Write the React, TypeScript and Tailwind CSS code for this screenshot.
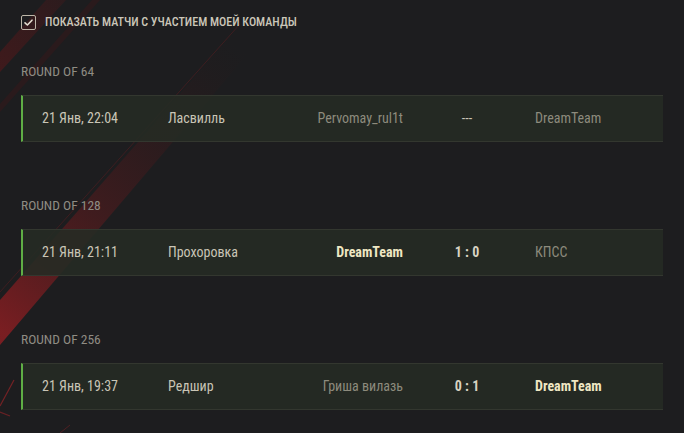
import React from "react";

type Match = {
  date: string;
  t1: string;
  t2: string;
  score: string;
  t3: string;
  win: 0 | 2 | 3;
};

const sections: { title: string; m: Match }[] = [
  { title: "ROUND OF 64", m: { date: "21 Янв, 22:04", t1: "Ласвилль", t2: "Pervomay_rul1t", score: "---", t3: "DreamTeam", win: 0 } },
  { title: "ROUND OF 128", m: { date: "21 Янв, 21:11", t1: "Прохоровка", t2: "DreamTeam", score: "1 : 0", t3: "КПСС", win: 2 } },
  { title: "ROUND OF 256", m: { date: "21 Янв, 19:37", t1: "Редшир", t2: "Гриша вилазь", score: "0 : 1", t3: "DreamTeam", win: 3 } },
];

function Row({ m }: { m: Match }) {
  return (
    <div className="flex items-center h-[47px] border-l-2 border-l-[#5fae45] border-y border-y-[#33372f] bg-[#262b23]/90 text-[14px] leading-[17px]">
      <div className="w-[145px] pl-[19px] text-[#c9c5b6]">{m.date}</div>
      <div className="w-[120px] text-[#c9c5b6]">{m.t1}</div>
      <div className={"w-[115px] text-right " + (m.win === 2 ? "text-[#efe7c3] font-bold" : "text-[#8d8b7d]")}>{m.t2}</div>
      <div className={"w-[132px] text-center pr-[4px] " + (m.score === "---" ? "text-[#c9c5b6]" : "text-[#d8d3c2] font-bold")}>{m.score}</div>
      <div className={m.win === 3 ? "text-[#efe7c3] font-bold" : "text-[#8d8b7d]"}>{m.t3}</div>
    </div>
  );
}

export default function App() {
  return (
    <div
      className="relative w-[684px] h-[433px] overflow-hidden bg-[#1d1d1f]"
      style={{ fontFamily: '"Roboto Condensed", "Liberation Sans Narrow", "DejaVu Sans Condensed", Roboto, sans-serif' }}
    >
      <svg className="absolute inset-0" width="684" height="433" viewBox="0 0 684 433">
        <defs>
          <linearGradient id="band" x1="0" y1="330" x2="230" y2="40" gradientUnits="userSpaceOnUse">
            <stop offset="0" stopColor="#8a1e22" stopOpacity="0.85" />
            <stop offset="0.4" stopColor="#6a1a1d" stopOpacity="0.45" />
            <stop offset="1" stopColor="#3a1416" stopOpacity="0" />
          </linearGradient>
          <linearGradient id="band2" x1="0" y1="90" x2="90" y2="0" gradientUnits="userSpaceOnUse">
            <stop offset="0" stopColor="#5a1719" stopOpacity="0.6" />
            <stop offset="1" stopColor="#5a1719" stopOpacity="0.2" />
          </linearGradient>
        </defs>
        <polygon points="0,345 0,300 250,14 280,16" fill="url(#band)" />
        <line x1="0" y1="292" x2="240" y2="24" stroke="#7a1e22" strokeWidth="1" opacity="0.35" />
        <polygon points="0,72 0,52 46,0 66,0" fill="url(#band2)" />
        <polygon points="0,112 0,104 92,0 100,0" fill="#4a1517" opacity="0.3" />
        <line x1="0" y1="406" x2="14" y2="380" stroke="#9a2428" strokeWidth="1.2" opacity="0.7" />
        <line x1="0" y1="412" x2="10" y2="416" stroke="#9a2428" strokeWidth="1.2" opacity="0.6" />
        <line x1="60" y1="433" x2="70" y2="425" stroke="#9a2428" strokeWidth="1" opacity="0.4" />
      </svg>
      <div className="relative pl-[21px] pr-[21px] pt-[15px]">
        <div className="flex items-center gap-[9px] h-[15px]">
          <div className="w-[15px] h-[15px] border border-[#bdb6a8] rounded-[2px] flex items-center justify-center">
            <svg width="11" height="11" viewBox="0 0 11 11">
              <path d="M2 5.8 L4.4 8 L9 3.2" fill="none" stroke="#e4ded0" strokeWidth="1.6" strokeLinecap="round" strokeLinejoin="round" />
            </svg>
          </div>
          <span className="text-[12px] leading-[15px] text-[#cbc6b8] font-medium">ПОКАЗАТЬ МАТЧИ С УЧАСТИЕМ МОЕЙ КОМАНДЫ</span>
        </div>
        <div className="flex flex-col mt-[33px] gap-[55px]">
          {sections.map((s) => (
            <div key={s.title} className="flex flex-col gap-[16px]">
              <div className="text-[13.5px] leading-[16px] text-[#8f8c83]">{s.title}</div>
              <Row m={s.m} />
            </div>
          ))}
        </div>
      </div>
    </div>
  );
}
